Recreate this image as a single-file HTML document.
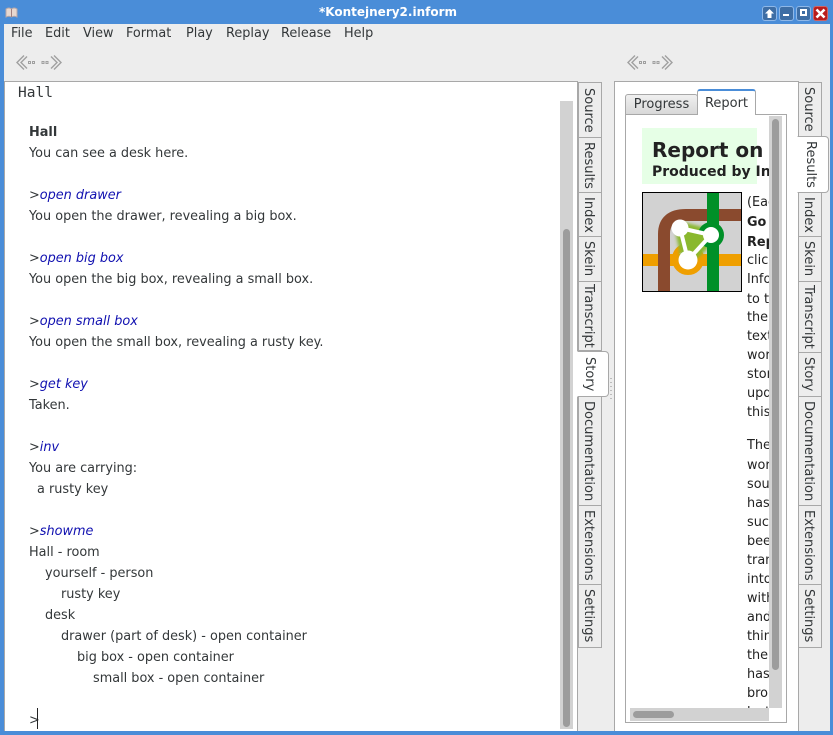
<!DOCTYPE html>
<html><head><meta charset="utf-8">
<style>
html,body{margin:0;padding:0;width:833px;height:735px;overflow:hidden;background:#4a8dd8}
body{position:relative;font-family:"DejaVu Sans",sans-serif;font-size:12.85px;color:#333739}
.a{position:absolute}
.t{position:absolute;white-space:pre;line-height:16px;height:16px}
#win{position:absolute;left:4px;top:24px;width:826px;height:707px;background:#ededed}
.m{position:absolute;top:26px;white-space:pre;line-height:16px;font-size:12.85px;color:#333739}
.vt{position:absolute;box-sizing:border-box;background:#ededed;border:1px solid #a8a8a8;writing-mode:vertical-rl;font-size:13px;line-height:18px;padding-right:4px;text-align:center;white-space:pre;color:#333739}
.sel{background:#fff;border-radius:0 4px 4px 0;z-index:3;border-left-color:#fff;line-height:24px}
.cmd{color:#1010b0;font-style:italic}
.r{position:absolute;left:747px;white-space:pre;line-height:16px;color:#222;font-size:12.85px}
.btn{position:absolute;top:6px;width:15px;height:15px;box-sizing:border-box;border:1px solid #8fb8e8;border-radius:3px;background:#3e6ea5}
</style></head><body>
<div id="win"></div>
<div class="t" style="left:319px;top:4px;color:#fff;font-weight:bold;font-size:12px;">*Kontejnery2.inform</div>
<svg class="a" style="left:5px;top:7px" width="13" height="12" viewBox="0 0 13 12"><path d="M1 2Q4 0 6.500 2Q9 0 12 2V10Q9 8.500 6.500 10Q4 8.500 1 10Z" fill="#e8d8d0" stroke="#b8a8a8"/><path d="M6.500 2V10" stroke="#a08080"/></svg>
<div class="btn" style="left:762px"><svg width="13" height="13" style="display:block"><path d="M6.500 2L11 6.500H8.500V11H4.500V6.500H2Z" fill="#fff"/></svg></div>
<div class="btn" style="left:779px"><svg width="13" height="13" style="display:block"><rect x="3" y="7" width="6" height="2" fill="#fff"/></svg></div>
<div class="btn" style="left:796px"><svg width="13" height="13" style="display:block"><rect x="4" y="3" width="5" height="5" fill="none" stroke="#fff" stroke-width="2"/></svg></div>
<div class="btn" style="left:813px;background:#b81c1c;border-color:#d06060"><svg width="13" height="13" style="display:block"><path d="M2.500 2.500L10.500 10.500M10.500 2.500L2.500 10.500" stroke="#fff" stroke-width="2.600"/></svg></div>

<div class="m" style="left:11px">File</div>
<div class="m" style="left:45px">Edit</div>
<div class="m" style="left:83px">View</div>
<div class="m" style="left:126px">Format</div>
<div class="m" style="left:186px">Play</div>
<div class="m" style="left:226px">Replay</div>
<div class="m" style="left:281px">Release</div>
<div class="m" style="left:344px">Help</div>

<svg class="a" style="left:15px;top:54px" width="48" height="18" fill="none" stroke="#a0a0a0">
<path d="M9 1.500L2 8.500L9 15.500M12 2.500L6 8.500L12 14.500" stroke-width="1.400"/><rect x="13.500" y="7.500" width="2" height="2" /><rect x="17.500" y="7.500" width="2" height="2"/>
<path d="M39 1.500L46 8.500L39 15.500M36 2.500L42 8.500L36 14.500" stroke-width="1.400"/><rect x="31" y="7.500" width="2" height="2"/><rect x="27" y="7.500" width="2" height="2"/></svg>
<svg class="a" style="left:626px;top:54px" width="48" height="18" fill="none" stroke="#a0a0a0">
<path d="M9 1.500L2 8.500L9 15.500M12 2.500L6 8.500L12 14.500" stroke-width="1.400"/><rect x="13.500" y="7.500" width="2" height="2"/><rect x="17.500" y="7.500" width="2" height="2"/>
<path d="M39 1.500L46 8.500L39 15.500M36 2.500L42 8.500L36 14.500" stroke-width="1.400"/><rect x="31" y="7.500" width="2" height="2"/><rect x="27" y="7.500" width="2" height="2"/></svg>

<!-- left pane -->
<div class="a" style="left:4px;top:81px;width:574px;height:650px;box-sizing:border-box;background:#fff;border:1px solid #a8a8a8;border-bottom:0"></div>
<div class="t" style="left:18px;top:85px;font-family:'DejaVu Sans Mono',monospace;font-size:14.500px">Hall</div>
<div class="t" style="left:29px;top:125px;font-weight:bold">Hall</div>
<div class="t" style="left:29px;top:146px">You can see a desk here.</div>
<div class="t" style="left:29px;top:188px">&gt;<span class="cmd">open drawer</span></div>
<div class="t" style="left:29px;top:209px">You open the drawer, revealing a big box.</div>
<div class="t" style="left:29px;top:251px">&gt;<span class="cmd">open big box</span></div>
<div class="t" style="left:29px;top:272px">You open the big box, revealing a small box.</div>
<div class="t" style="left:29px;top:314px">&gt;<span class="cmd">open small box</span></div>
<div class="t" style="left:29px;top:335px">You open the small box, revealing a rusty key.</div>
<div class="t" style="left:29px;top:377px">&gt;<span class="cmd">get key</span></div>
<div class="t" style="left:29px;top:398px">Taken.</div>
<div class="t" style="left:29px;top:440px">&gt;<span class="cmd">inv</span></div>
<div class="t" style="left:29px;top:461px">You are carrying:</div>
<div class="t" style="left:37px;top:482px">a rusty key</div>
<div class="t" style="left:29px;top:524px">&gt;<span class="cmd">showme</span></div>
<div class="t" style="left:29px;top:545px">Hall - room</div>
<div class="t" style="left:45px;top:566px">yourself - person</div>
<div class="t" style="left:61px;top:587px">rusty key</div>
<div class="t" style="left:45px;top:608px">desk</div>
<div class="t" style="left:61px;top:629px">drawer (part of desk) - open container</div>
<div class="t" style="left:77px;top:650px">big box - open container</div>
<div class="t" style="left:93px;top:671px">small box - open container</div>
<div class="t" style="left:29px;top:713px">&gt;</div>
<div class="a" style="left:37px;top:708px;width:1px;height:21px;background:#222"></div>
<div class="a" style="left:560px;top:101px;width:13px;height:628px;background:#d2d2d2"></div>
<div class="a" style="left:563px;top:229px;width:7px;height:498px;background:#9c9c9c;border-radius:4px"></div>

<!-- left tabs -->
<div class="vt" style="left:578px;top:82px;width:24px;height:56px">Source</div>
<div class="vt" style="left:578px;top:137px;width:24px;height:56px">Results</div>
<div class="vt" style="left:578px;top:192px;width:24px;height:45px">Index</div>
<div class="vt" style="left:578px;top:236px;width:24px;height:46px">Skein</div>
<div class="vt" style="left:578px;top:281px;width:24px;height:70px">Transcript</div>
<div class="vt sel" style="left:577px;top:351px;width:32px;height:46px;padding-right:7px">Story</div>
<div class="vt" style="left:578px;top:396px;width:24px;height:110px">Documentation</div>
<div class="vt" style="left:578px;top:505px;width:24px;height:80px">Extensions</div>
<div class="vt" style="left:578px;top:584px;width:24px;height:64px">Settings</div>
<div class="a" style="left:610px;top:378px;width:2px;height:24px;background:repeating-linear-gradient(#bcbcbc 0 1px,transparent 1px 4px)"></div>

<!-- right pane -->
<div class="a" style="left:614px;top:81px;width:185px;height:650px;box-sizing:border-box;background:#fff;border:1px solid #a8a8a8;border-bottom:0"></div>
<div class="a" style="left:625px;top:114px;width:162px;height:609px;box-sizing:border-box;background:#fff;border:1px solid #a8a8a8"></div>
<div class="a" style="left:625px;top:94px;width:73px;height:21px;box-sizing:border-box;background:linear-gradient(#f0f0f0,#d8d8d8);border:1px solid #a8a8a8;border-radius:3px 3px 0 0;text-align:center;line-height:19px;font-size:13px">Progress</div>
<div class="a" style="left:697px;top:89px;width:59px;height:26px;box-sizing:border-box;background:#fff;border:1px solid #a8a8a8;border-top:2px solid #4a8dd8;border-bottom:0;border-radius:3px 3px 0 0;text-align:center;line-height:26px;font-size:13px">Report</div>
<div class="a" style="left:642px;top:128px;width:115px;height:56px;background:#e6ffe6"></div>
<div class="a" style="left:626px;top:128px;width:143px;height:60px;overflow:hidden">
<div class="t" style="left:26px;top:10px;font-weight:bold;font-size:20px;line-height:24px;height:24px;color:#222">Report on</div>
<div class="t" style="left:26px;top:35px;font-weight:bold;font-size:14px;line-height:18px;height:18px;color:#222">Produced by Inform</div>
</div>
<svg class="a" style="left:642px;top:192px" width="100" height="100" viewBox="0 0 100 100">
<defs><filter id="b" x="-30%" y="-30%" width="160%" height="160%"><feGaussianBlur stdDeviation="1.500"/></filter></defs>
<rect x=".5" y=".5" width="99" height="99" fill="#d2d2d2" stroke="#000"/>
<rect x="1" y="62" width="98" height="12" fill="#ef9f00"/>
<circle cx="46" cy="67" r="13" fill="none" stroke="#ef9f00" stroke-width="6"/>
<path d="M22 99V42Q22 23 44 23H99" fill="none" stroke="#8a4a2e" stroke-width="12"/>
<path d="M40 37L68 44L46 66Z" fill="#8ab82e" stroke="#8ab82e" stroke-width="14" stroke-linejoin="round" filter="url(#b)"/>
<rect x="65" y="1" width="12" height="98" fill="#009028"/>
<circle cx="69" cy="43" r="13" fill="#009028"/>
<path d="M38 36L69 43L46 68Z" fill="#8ab82e" stroke="#fff" stroke-width="4" stroke-linejoin="round"/>
<circle cx="38" cy="36" r="8.500" fill="#fff"/><circle cx="69" cy="43" r="8" fill="#fff"/><circle cx="46" cy="68" r="9.500" fill="#fff"/>
</svg>
<div class="a" style="left:626px;top:190px;width:143px;height:518px;overflow:hidden">
<div class="r" style="left:121px;top:5px">(Each</div>
<div class="r" style="left:121px;top:25px;font-weight:bold">Go</div>
<div class="r" style="left:121px;top:45px;font-weight:bold">Report</div>
<div class="r" style="left:121px;top:63px">clicked</div>
<div class="r" style="left:121px;top:82px">Inform</div>
<div class="r" style="left:121px;top:102px">to the</div>
<div class="r" style="left:121px;top:120px">the</div>
<div class="r" style="left:121px;top:139px">text</div>
<div class="r" style="left:121px;top:158px">world</div>
<div class="r" style="left:121px;top:177px">story</div>
<div class="r" style="left:121px;top:196px">update</div>
<div class="r" style="left:121px;top:215px">this</div>
<div class="r" style="left:121px;top:248px">The</div>
<div class="r" style="left:121px;top:268px">world</div>
<div class="r" style="left:121px;top:287px">source</div>
<div class="r" style="left:121px;top:306px">has</div>
<div class="r" style="left:121px;top:325px">success</div>
<div class="r" style="left:121px;top:344px">been</div>
<div class="r" style="left:121px;top:363px">translated</div>
<div class="r" style="left:121px;top:382px">into</div>
<div class="r" style="left:121px;top:401px">with</div>
<div class="r" style="left:121px;top:420px">and</div>
<div class="r" style="left:121px;top:439px">things</div>
<div class="r" style="left:121px;top:458px">the</div>
<div class="r" style="left:121px;top:477px">has</div>
<div class="r" style="left:121px;top:496px">brought</div>
<div class="r" style="left:121px;top:515px">last</div>
</div>
<div class="a" style="left:769px;top:116px;width:13px;height:592px;background:#d2d2d2"></div>
<div class="a" style="left:772px;top:119px;width:7px;height:551px;background:#9c9c9c;border-radius:4px"></div>
<div class="a" style="left:630px;top:708px;width:139px;height:13px;background:#d2d2d2"></div>
<div class="a" style="left:633px;top:711px;width:41px;height:7px;background:#9c9c9c;border-radius:4px"></div>

<!-- right tabs -->
<div class="vt" style="left:798px;top:82px;width:24px;height:55px">Source</div>
<div class="vt sel" style="left:797px;top:136px;width:32px;height:57px;padding-right:6px">Results</div>
<div class="vt" style="left:798px;top:192px;width:24px;height:45px">Index</div>
<div class="vt" style="left:798px;top:236px;width:24px;height:46px">Skein</div>
<div class="vt" style="left:798px;top:281px;width:24px;height:72px">Transcript</div>
<div class="vt" style="left:798px;top:352px;width:24px;height:45px">Story</div>
<div class="vt" style="left:798px;top:396px;width:24px;height:110px">Documentation</div>
<div class="vt" style="left:798px;top:505px;width:24px;height:80px">Extensions</div>
<div class="vt" style="left:798px;top:584px;width:24px;height:64px">Settings</div>
</body></html>
